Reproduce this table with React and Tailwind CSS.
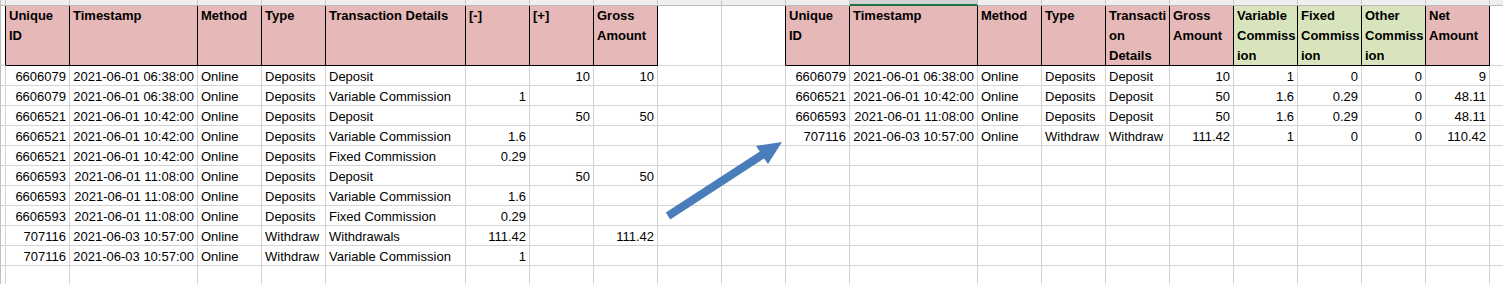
const widths = [6, 64, 128, 64, 64, 140, 64, 64, 64, 64, 64, 64, 128, 64, 64, 64, 64, 64, 64, 64, 64];
const wCls = { 6: "w-[6px]", 64: "w-[64px]", 128: "w-[128px]", 140: "w-[140px]" };

const rightAligned = new Set([1, 2, 6, 7, 8, 11, 12, 16, 17, 18, 19, 20]);

const headers = {
  1: { lines: ["Unique", "ID"] },
  2: { lines: ["Timestamp"] },
  3: { lines: ["Method"] },
  4: { lines: ["Type"] },
  5: { lines: ["Transaction Details"] },
  6: { lines: ["[-]"] },
  7: { lines: ["[+]"] },
  8: { lines: ["Gross", "Amount"] },
  11: { lines: ["Unique", "ID"] },
  12: { lines: ["Timestamp"] },
  13: { lines: ["Method"] },
  14: { lines: ["Type"] },
  15: { lines: ["Transacti", "on", "Details"] },
  16: { lines: ["Gross", "Amount"] },
  17: { lines: ["Variable", "Commiss", "ion"], green: true },
  18: { lines: ["Fixed", "Commiss", "ion"], green: true },
  19: { lines: ["Other", "Commiss", "ion"], green: true },
  20: { lines: ["Net", "Amount"] },
};

const left = [
  ["6606079", "2021-06-01 06:38:00", "Online", "Deposits", "Deposit", "", "10", "10"],
  ["6606079", "2021-06-01 06:38:00", "Online", "Deposits", "Variable Commission", "1", "", ""],
  ["6606521", "2021-06-01 10:42:00", "Online", "Deposits", "Deposit", "", "50", "50"],
  ["6606521", "2021-06-01 10:42:00", "Online", "Deposits", "Variable Commission", "1.6", "", ""],
  ["6606521", "2021-06-01 10:42:00", "Online", "Deposits", "Fixed Commission", "0.29", "", ""],
  ["6606593", "2021-06-01 11:08:00", "Online", "Deposits", "Deposit", "", "50", "50"],
  ["6606593", "2021-06-01 11:08:00", "Online", "Deposits", "Variable Commission", "1.6", "", ""],
  ["6606593", "2021-06-01 11:08:00", "Online", "Deposits", "Fixed Commission", "0.29", "", ""],
  ["707116", "2021-06-03 10:57:00", "Online", "Withdraw", "Withdrawals", "111.42", "", "111.42"],
  ["707116", "2021-06-03 10:57:00", "Online", "Withdraw", "Variable Commission", "1", "", ""],
  ["", "", "", "", "", "", "", ""],
];

const right = [
  ["6606079", "2021-06-01 06:38:00", "Online", "Deposits", "Deposit", "10", "1", "0", "0", "9"],
  ["6606521", "2021-06-01 10:42:00", "Online", "Deposits", "Deposit", "50", "1.6", "0.29", "0", "48.11"],
  ["6606593", "2021-06-01 11:08:00", "Online", "Deposits", "Deposit", "50", "1.6", "0.29", "0", "48.11"],
  ["707116", "2021-06-03 10:57:00", "Online", "Withdraw", "Withdraw", "111.42", "1", "0", "0", "110.42"],
];

function StripRow() {
  return (
    <div className="flex h-[6px]">
      {widths.map((w, i) => (
        <div
          key={i}
          className={`${wCls[w]} shrink-0 border-r border-[#c6c6c6] ${
            i === 12 ? "bg-[#d2d2d2] border-b-2 border-b-[#217346]" : "bg-[#efefef] border-b border-b-[#bcbcbc]"
          } ${i === 0 ? "border-l" : ""}`}
        />
      ))}
      <div className="flex-1 bg-[#efefef] border-b border-[#bcbcbc]" />
    </div>
  );
}

function HeaderRow() {
  return (
    <div className="flex h-[60px]">
      {widths.map((w, i) => {
        const h = headers[i];
        const blackRight = h || i === 0 || i === 10;
        return (
          <div
            key={i}
            className={`${wCls[w]} shrink-0 overflow-hidden border-r ${
              blackRight ? "border-r-black" : "border-r-[#d4d4d4]"
            } border-b ${h ? "border-b-black" : "border-b-[#d4d4d4]"} ${i === 0 ? "border-l border-l-[#bfbfbf]" : ""} ${
              h ? (h.green ? "bg-[#d8e4bc]" : "bg-[#e6b8b7]") : "bg-white"
            } pl-[3px] font-bold leading-[20px]`}
          >
            {h && h.lines.map((t) => (
              <div key={t} className="whitespace-nowrap">{t}</div>
            ))}
          </div>
        );
      })}
      <div className="flex-1 border-b border-[#d4d4d4]" />
    </div>
  );
}

function DataRow({ cells }) {
  return (
    <div className="flex h-[20px]">
      {widths.map((w, i) => (
        <div
          key={i}
          className={`${wCls[w]} shrink-0 overflow-hidden whitespace-nowrap border-r border-b border-[#d4d4d4] ${
            i === 0 ? "border-l border-l-[#bfbfbf]" : ""
          } ${rightAligned.has(i) ? "text-right pr-[3px]" : "pl-[3px]"} pt-[2px] leading-[17px]`}
        >
          {cells[i]}
        </div>
      ))}
      <div className="flex-1 border-b border-[#d4d4d4]" />
    </div>
  );
}

function Arrow() {
  return (
    <svg className="absolute left-0 top-0 pointer-events-none" width="1503" height="284">
      <polygon
        points="665.8,212.6 759.8,151.6 756,146 782,142 768,164 764.2,158.4 670.2,219.4"
        fill="#4a7ebb"
      />
    </svg>
  );
}

export default function App() {
  const rows = left.map((l, r) => {
    const rr = right[r] || [];
    return ["", ...l, "", "", ...Array.from({ length: 10 }, (_, k) => rr[k] || "")];
  });

  return (
    <div className="relative w-[1503px] h-[284px] overflow-hidden bg-white text-[13px] text-black font-['Liberation_Sans',Arial,sans-serif]">
      <StripRow />
      <HeaderRow />
      {rows.map((cells, r) => (
        <DataRow key={r} cells={cells} />
      ))}
      <Arrow />
    </div>
  );
}
